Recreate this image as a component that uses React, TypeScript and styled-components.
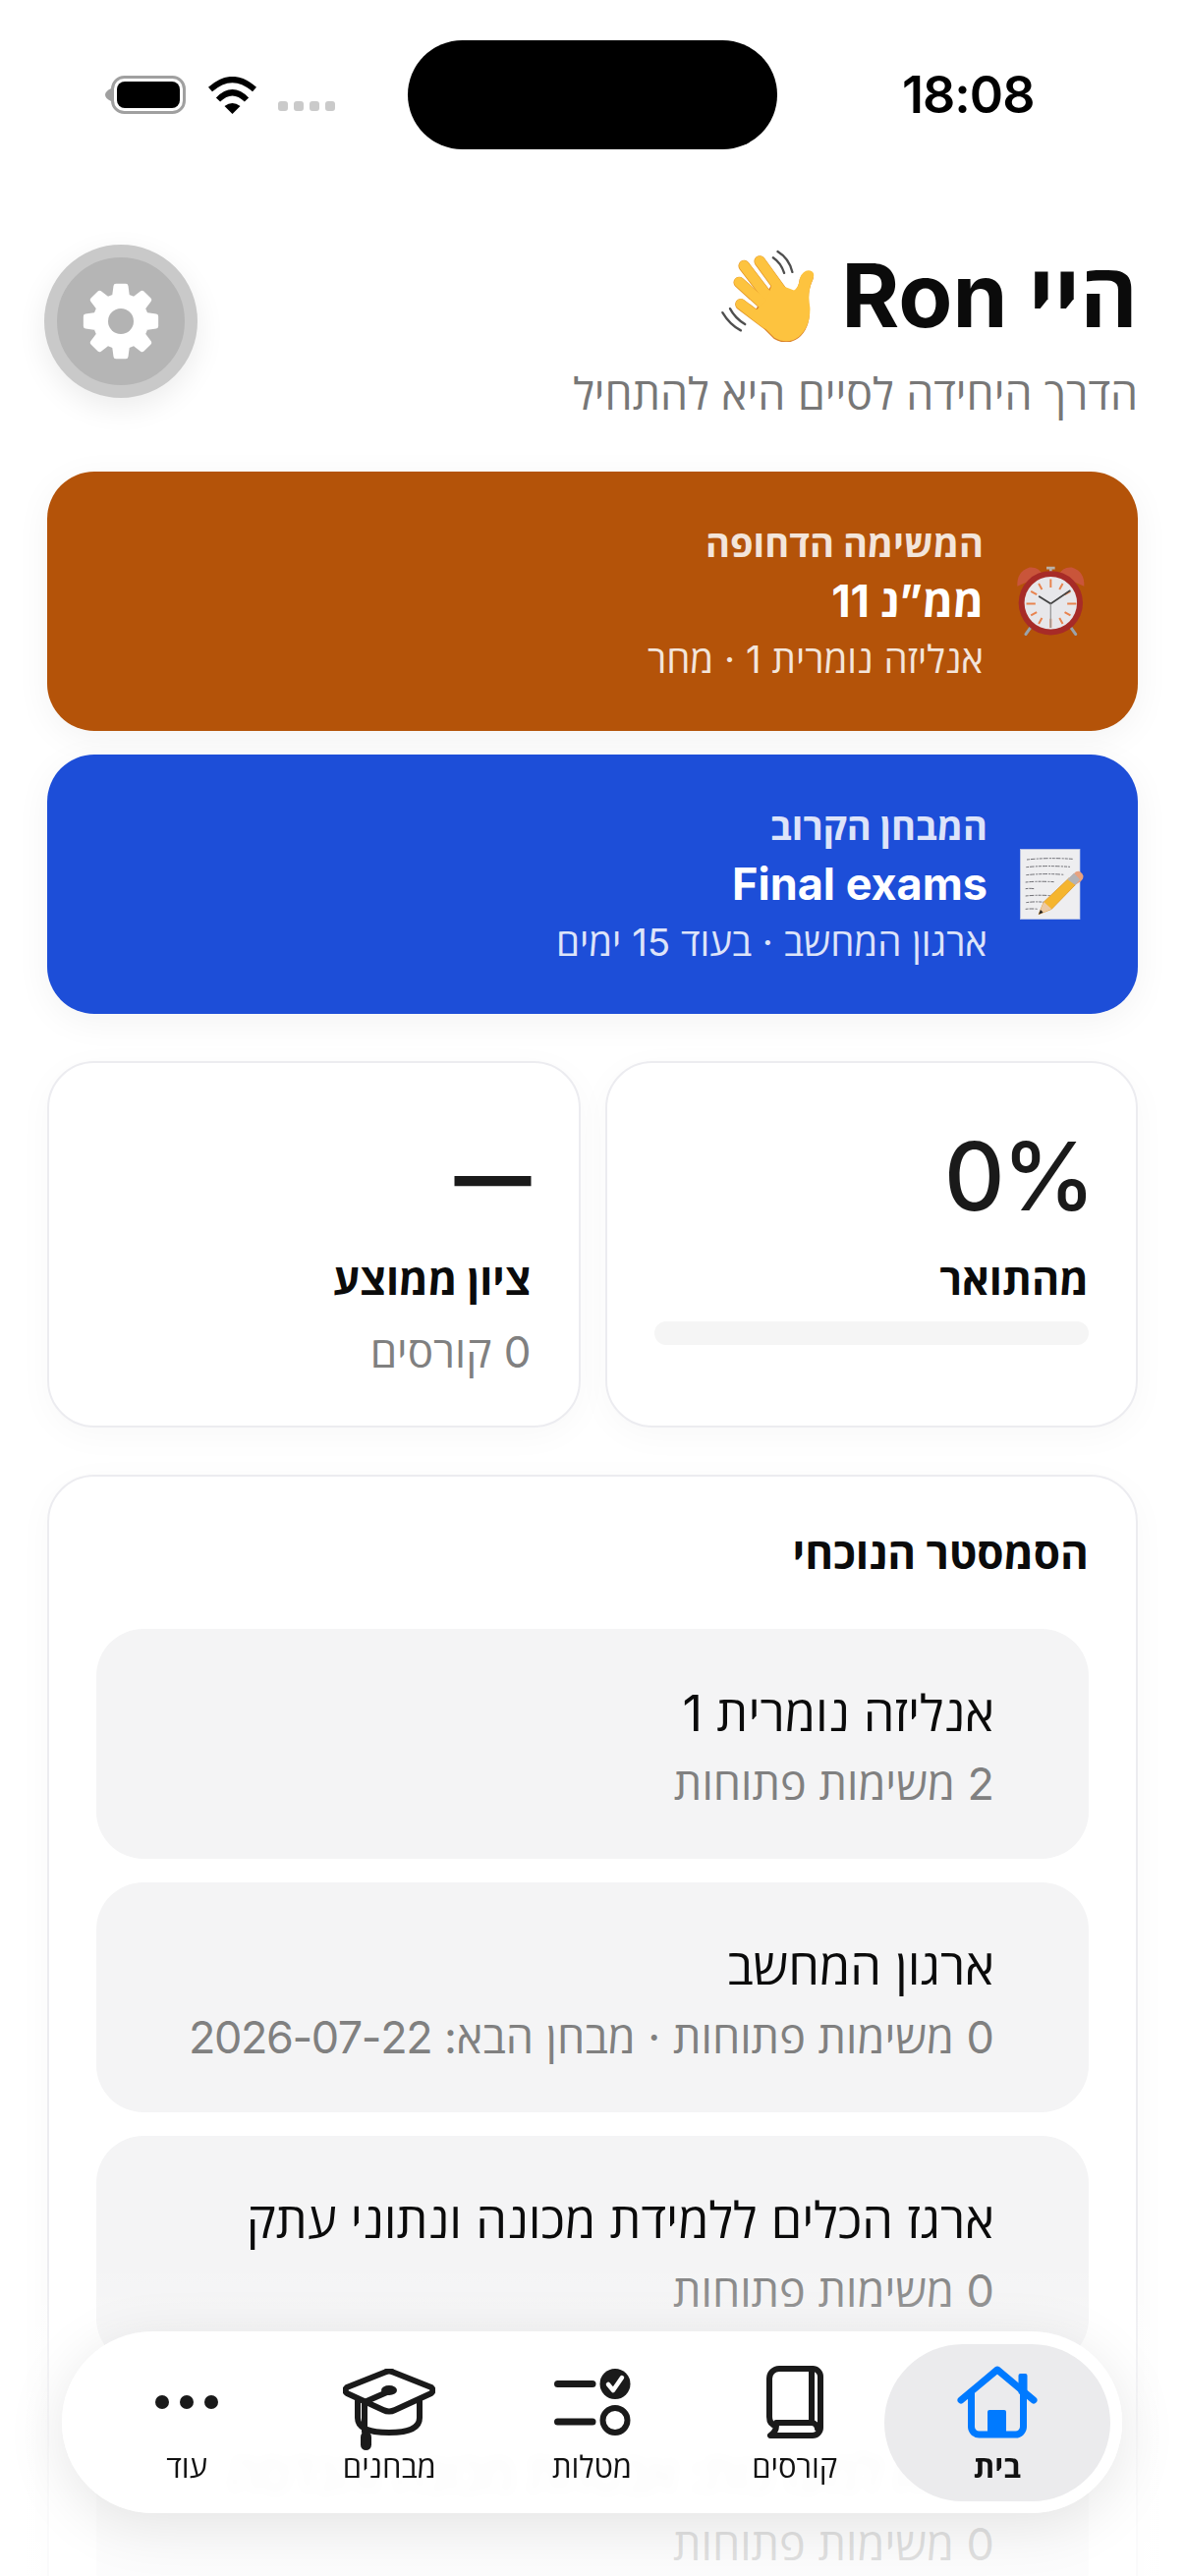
import React from 'react';
import styled, { createGlobalStyle } from 'styled-components';

const GlobalStyle = createGlobalStyle`
  html, body {
    margin: 0;
    padding: 0;
    background: #fff;
  }
  * { box-sizing: border-box; }
`;

const Screen = styled.div`
  position: relative;
  width: 1206px;
  height: 2622px;
  overflow: hidden;
  background: #fff;
  font-family: Inter, "Open Sans", "Liberation Sans", sans-serif;
  color: #0b0b0b;
`;

const StatusBar = styled.div`
  direction: ltr;
  display: flex;
  align-items: center;
  height: 111px;
  margin-top: 41px;
  padding-left: 106px;
`;

const StatusIcons = styled.div`
  display: flex;
  align-items: center;
  width: 235px;
  gap: 21px;
`;

const Dots = styled.div`
  display: flex;
  gap: 6px;
  margin-top: 22px;
`;

const Dot = styled.span`
  width: 10px;
  height: 10px;
  border-radius: 3px;
  background: #cacaca;
`;

const Island = styled.div`
  width: 376px;
  height: 111px;
  margin-left: 74px;
  border-radius: 56px;
  background: #000;
`;

const Clock = styled.div`
  width: 134px;
  margin-left: 127px;
  font-size: 52px;
  font-weight: 600;
  letter-spacing: -1px;
  color: #000;
  text-align: right;
`;

const Main = styled.main`
  direction: rtl;
  padding: 97px 48px 0;
`;

const Header = styled.header`
  display: flex;
  justify-content: space-between;
  align-items: flex-start;
  margin-bottom: 49px;
`;

const Title = styled.h1`
  display: flex;
  align-items: center;
  gap: 26px;
  margin: 0;
  height: 104px;
  font-size: 90px;
  line-height: 104px;
  font-weight: 700;
`;

const Subtitle = styled.p`
  margin: 18px 0 0;
  font-size: 44.7px;
  line-height: 60px;
  color: #777;
`;

const GearButton = styled.button`
  display: flex;
  align-items: center;
  justify-content: center;
  width: 156px;
  height: 156px;
  margin-left: -3px;
  padding: 0;
  border: 13px solid #c9c9c9;
  border-radius: 50%;
  background: #b5b5b5;
  box-shadow: 0 10px 30px rgba(0, 0, 0, 0.08);
`;

const Highlights = styled.div`
  display: flex;
  flex-direction: column;
  gap: 24px;
`;

const Highlight = styled.div<{ $bg: string }>`
  display: flex;
  align-items: center;
  gap: 33px;
  height: 264px;
  padding: 0 54px 0 48px;
  border-radius: 48px;
  background: ${(p) => p.$bg};
  color: #fff;
  box-shadow: 0 8px 36px rgba(0, 0, 0, 0.05);
`;

const HighlightText = styled.div`
  display: flex;
  flex-direction: column;
  gap: 8px;
`;

const HighlightLabel = styled.div`
  font-size: 38px;
  line-height: 46px;
  font-weight: 700;
  opacity: 0.85;
`;

const HighlightTitle = styled.div`
  font-size: 45px;
  line-height: 56px;
  font-weight: 700;
`;

const HighlightSub = styled.div`
  font-size: 38.5px;
  line-height: 46px;
  opacity: 0.85;
`;

const Stats = styled.div`
  display: grid;
  grid-template-columns: 1fr 1fr;
  gap: 25px;
  margin-top: 48px;
`;

const Card = styled.section`
  border: 2px solid #ececf0;
  border-radius: 48px;
  background: #fff;
  box-shadow: 0 8px 36px rgba(0, 0, 0, 0.03);
`;

const StatCard = styled(Card)`
  height: 373px;
  padding: 58px 48px 0;
`;

const StatValue = styled.div`
  height: 120px;
  margin-right: -4px;
  font-size: 96px;
  line-height: 114px;
  font-weight: 500;
  letter-spacing: -3px;
  color: #1a1a1a;
`;

const StatDash = styled(StatValue)`
  margin-right: 0;
  font-size: 78px;
  font-weight: 800;
  letter-spacing: 0;
`;

const StatLabel = styled.div`
  margin-top: 15px;
  font-size: 43px;
  line-height: 54px;
  font-weight: 700;
`;

const StatNote = styled.div`
  margin-top: 20px;
  font-size: 44px;
  line-height: 54px;
  color: #808080;
`;

const ProgressTrack = styled.div`
  height: 24px;
  margin-top: 16px;
  border-radius: 12px;
  background: #f5f5f5;
`;

const Semester = styled(Card)`
  margin-top: 48px;
  padding: 48px;
`;

const SemesterTitle = styled.h2`
  margin: 0 0 47px;
  font-size: 44px;
  line-height: 60px;
  font-weight: 700;
`;

const CourseList = styled.div`
  display: flex;
  flex-direction: column;
  gap: 24px;
`;

const Course = styled.div`
  height: 234px;
  padding: 50px 96px 0 48px;
  border-radius: 48px;
  background: #f4f4f5;
`;

const CourseName = styled.div`
  font-size: 50.5px;
  line-height: 72px;
`;

const CourseNote = styled.div`
  margin-top: 8px;
  font-size: 45px;
  line-height: 56px;
  color: #808080;
`;

const NoteDate = styled.span`
  letter-spacing: -1.4px;
`;

const BottomFade = styled.div`
  position: absolute;
  left: 0;
  right: 0;
  bottom: 0;
  height: 320px;
  background: linear-gradient(to bottom, rgba(255, 255, 255, 0), rgba(255, 255, 255, 0.72) 60%, rgba(255, 255, 255, 0.76));
`;

const TabBar = styled.nav`
  direction: rtl;
  position: absolute;
  left: 63px;
  bottom: 64px;
  display: grid;
  grid-template-columns: repeat(5, 1fr);
  width: 1079px;
  height: 185px;
  padding: 0 24px;
  border-radius: 93px;
  background: rgba(255, 255, 255, 0.9);
  backdrop-filter: blur(6px);
  box-shadow: 0 12px 60px rgba(0, 0, 0, 0.1);
`;

const Tab = styled.div<{ $active?: boolean }>`
  position: relative;
  display: flex;
  flex-direction: column;
  align-items: center;

  ${(p) =>
    p.$active &&
    `
    &::before {
      content: '';
      position: absolute;
      inset: 13px -12px 12px;
      border-radius: 80px;
      background: #ebebed;
    }
  `}
`;

const TabIcon = styled.div<{ $nudge?: number }>`
  position: relative;
  top: ${(p) => p.$nudge ?? 0}px;
  display: flex;
  align-items: center;
  justify-content: center;
  height: 92px;
  margin-top: 26px;
`;

const TabLabel = styled.div<{ $active?: boolean }>`
  position: relative;
  font-size: 31px;
  line-height: 40px;
  font-weight: ${(p) => (p.$active ? 700 : 400)};
  color: #111;
`;

// Eight-tooth cog with a punched centre
function gearPath() {
  const cx = 39;
  const cy = 39;
  const parts: string[] = [];
  for (let i = 0; i < 8; i++) {
    const a = (i * Math.PI) / 4 - Math.PI / 2;
    const pt = (r: number, da: number) =>
      `${(cx + r * Math.cos(a + da)).toFixed(2)} ${(cy + r * Math.sin(a + da)).toFixed(2)}`;
    parts.push(
      `${i === 0 ? 'M' : 'L'}${pt(26, -0.25)} L${pt(36, -0.14)} L${pt(36, 0.14)} L${pt(26, 0.25)}`
    );
  }
  return parts.join(' ') + ' Z';
}

const GearIcon = () => (
  <svg width="78" height="78" viewBox="0 0 78 78">
    <path d={gearPath()} fill="#fff" stroke="#fff" strokeWidth="5" strokeLinejoin="round" />
    <circle cx="39" cy="39" r="13" fill="#b3b3b3" />
  </svg>
);

const BatteryIcon = () => (
  <svg width="84" height="39" viewBox="0 0 84 39">
    <path d="M7 13 Q1 16 1 19.5 Q1 23 7 26 Z" fill="#9f9f9f" />
    <rect x="8.5" y="1.5" width="73" height="36" rx="12" fill="none" stroke="#a0a0a0" strokeWidth="3" />
    <rect x="13" y="6" width="64" height="27" rx="8" fill="#000" />
  </svg>
);

const WifiIcon = () => (
  <svg width="51" height="38" viewBox="0 0 51 38">
    <path d="M3 13 Q25.5 -7 48 13" fill="none" stroke="#000" strokeWidth="6" />
    <path d="M11 23.5 Q25.5 9 40 23.5" fill="none" stroke="#000" strokeWidth="6" />
    <path d="M17.5 30 Q25.5 24 33.5 30 L25.5 38 Z" fill="#000" />
  </svg>
);

const WavingHand = () => (
  <svg width="97" height="94" viewBox="30 35 290 283">
    <g fill="none" stroke="#4f4f4f" strokeWidth="7" strokeLinecap="round">
      <path d="M205 41 Q240 62 250 104" />
      <path d="M191 60 Q215 76 225 107" />
      <path d="M36 228 Q58 265 92 283" />
      <path d="M59 216 Q74 245 105 264" />
    </g>
    <path
      d="M190 135 L255 160 Q270 150 273 122 Q285 95 305 100 Q322 105 312 128 Q295 165 304 212 Q306 272 270 302 Q235 328 195 305 L125 235 Z"
      fill="#d9822b"
      transform="translate(-1 4)"
    />
    <g fill="none" stroke="#e49a2e" strokeWidth="35" strokeLinecap="round">
      <path d="M150 71 L222 170" />
      <path d="M102 85 L190 200" />
      <path d="M87 136 L175 215" />
      <path d="M92 203 L170 262" />
    </g>
    <g fill="none" stroke="#fdc33f" strokeWidth="31" strokeLinecap="round">
      <path d="M150 70 L222 170" />
      <path d="M102 84 L190 200" />
      <path d="M87 135 L175 215" />
      <path d="M92 202 L170 262" />
    </g>
    <path
      d="M190 135 L255 160 Q270 150 273 122 Q285 95 305 100 Q322 105 312 128 Q295 165 304 212 Q306 272 270 302 Q235 328 195 305 L125 235 L170 190 Z"
      fill="#fdc33f"
    />
  </svg>
);

const AlarmClock = () => (
  <svg width="70" height="73" viewBox="40 46 212 220">
    <g stroke="#9aa3ab" strokeWidth="9" strokeLinecap="round">
      <path d="M92 225 L70 256" />
      <path d="M202 225 L224 256" />
    </g>
    <path d="M147 70 V50 M134 52 H160" stroke="#b9b0a8" strokeWidth="8" />
    <path d="M44 108 Q42 62 82 50 Q112 48 122 74 Z" fill="#c9553a" />
    <path d="M250 108 Q252 62 212 50 Q182 48 172 74 Z" fill="#c9553a" />
    <circle cx="147" cy="160" r="99" fill="#a72b27" />
    <path d="M48 160 A99 99 0 0 1 246 160 A90 90 0 0 0 48 160 Z" fill="#d9693f" />
    <circle cx="147" cy="160" r="81" fill="#e7e7ea" />
    <g stroke="#e8834e" strokeWidth="6">
      <path d="M147 86 V112 M147 208 V236 M72 162 H100 M198 162 H226" />
      <path d="M110 100 L120 118 M184 100 L174 118 M86 124 L104 134 M208 124 L190 134 M86 198 L104 188 M208 198 L190 188 M110 224 L120 206 M184 224 L174 206" />
    </g>
    <path d="M147 162 L112 140" stroke="#444" strokeWidth="6" strokeLinecap="round" />
    <path d="M147 162 L206 122" stroke="#444" strokeWidth="5" strokeLinecap="round" />
    <path d="M147 162 V236" stroke="#9a9a9a" strokeWidth="4" />
  </svg>
);

const MemoPad = () => (
  <svg width="66" height="72" viewBox="55 912 198 216">
    <rect x="56" y="913" width="182" height="214" fill="#eeeef0" stroke="#b9c4e6" strokeWidth="2" />
    <g fill="none" stroke="#55565c" strokeWidth="2.5" strokeDasharray="9 3 14 4 6 3">
      <path d="M76 945 Q140 938 216 943" />
      <path d="M74 968 Q130 962 208 967" />
      <path d="M74 992 Q130 986 190 991" />
      <path d="M72 1014 Q110 1010 160 1013" />
      <path d="M72 1034 Q84 1032 100 1034" />
      <path d="M72 1056 Q110 1052 150 1055" />
      <path d="M74 1076 Q100 1072 130 1075" />
      <path d="M72 1096 Q90 1094 110 1096" />
    </g>
    <path d="M112 1112 L128 1074 L204 1002 L224 1022 L152 1096 Z" fill="#f5b52e" stroke="#d9901f" strokeWidth="2" />
    <path d="M112 1112 L128 1074 L152 1096 Z" fill="#ecc9a4" />
    <path d="M112 1112 L118 1098 L126 1106 Z" fill="#222" />
    <path d="M204 1002 L226 982 Q240 976 248 994 Q250 1004 240 1012 L224 1022 Z" fill="#e8a27f" />
    <path d="M200 1006 L220 986 L238 1006 L224 1022 Z" fill="#b3b3b6" />
  </svg>
);

const HomeIcon = () => (
  <svg width="82" height="74" viewBox="0 0 82 74">
    <g fill="none" stroke="#007aff" strokeWidth="7" strokeLinecap="round" strokeLinejoin="round">
      <path d="M4 35 L41 4 L78 35" />
      <path d="M14.5 28 V62 a8 8 0 0 0 8 8 H59.500 a8 8 0 0 0 8 -8 V28" />
    </g>
    <rect x="62.5" y="8" width="9" height="21" rx="2" fill="#007aff" />
    <rect x="31" y="45" width="19" height="26" rx="2" fill="#007aff" />
  </svg>
);

const BookIcon = () => (
  <svg width="58" height="74" viewBox="0 0 58 74">
    <g fill="none" stroke="#1a1a1a" strokeWidth="6" strokeLinecap="round" strokeLinejoin="round">
      <path d="M4 71 H47 a8 8 0 0 0 8 -8 V11 a8 8 0 0 0 -8 -8 H13 a10 10 0 0 0 -10 10 V52 q0 8 7 9 q0 6 -6 10 Z" />
      <path d="M10 58 H46 a6.500 6.500 0 0 1 6 6" />
      <path d="M46 3 V58" />
    </g>
  </svg>
);

const TasksIcon = () => (
  <svg width="78" height="68" viewBox="0 0 78 68">
    <g stroke="#1a1a1a" strokeWidth="7" strokeLinecap="round">
      <path d="M3.5 15.5 H39" />
      <path d="M3.5 54 H39" />
    </g>
    <circle cx="62" cy="15.5" r="15.5" fill="#1a1a1a" />
    <path d="M55 16 L60 22 L69 9" fill="none" stroke="#fff" strokeWidth="4.5" strokeLinecap="round" strokeLinejoin="round" />
    <circle cx="62" cy="52.5" r="12.5" fill="none" stroke="#1a1a1a" strokeWidth="6" />
  </svg>
);

const CapIcon = () => (
  <svg width="94" height="83" viewBox="0 0 94 83">
    <g fill="none" stroke="#1a1a1a" strokeWidth="6" strokeLinecap="round" strokeLinejoin="round">
      <path d="M43 3.5 Q47 1.500 51 3.500 L90 19 Q93 22 90 25 L53 42 Q47 45 41 42 L4 25 Q1 22 4 19 Z" />
      <path d="M15 33 V50 Q15 65 47 65 Q78 65 78 50 V33" />
      <path d="M22 34 V64" />
      <path d="M22 34 L47 23" />
    </g>
    <ellipse cx="47" cy="22" rx="8" ry="5" fill="#1a1a1a" />
    <rect x="18" y="64" width="11" height="19" rx="5.500" fill="#1a1a1a" />
  </svg>
);

const MoreIcon = () => (
  <svg width="64" height="14" viewBox="0 0 64 14">
    <circle cx="7" cy="7" r="7" fill="#1a1a1a" />
    <circle cx="32" cy="7" r="7" fill="#1a1a1a" />
    <circle cx="57" cy="7" r="7" fill="#1a1a1a" />
  </svg>
);

const courses = [
  { name: 'אנליזה נומרית 1', note: '2 משימות פתוחות' },
  { name: 'ארגון המחשב', note: '0 משימות פתוחות · מבחן הבא: ', date: '2026-07-22' },
  { name: 'ארגז הכלים ללמידת מכונה ונתוני עתק', note: '0 משימות פתוחות' },
  { name: 'מבוא למערכות: אבטחת מכונה והנדסה', note: '0 משימות פתוחות' },
];

const tabs = [
  { label: 'בית', icon: <HomeIcon />, active: true },
  { label: 'קורסים', icon: <BookIcon /> },
  { label: 'מטלות', icon: <TasksIcon /> },
  { label: 'מבחנים', icon: <CapIcon />, nudge: 7 },
  { label: 'עוד', icon: <MoreIcon /> },
];

export default function App() {
  return (
    <Screen>
      <GlobalStyle />
      <StatusBar>
        <StatusIcons>
          <BatteryIcon />
          <WifiIcon />
          <Dots>
            <Dot />
            <Dot />
            <Dot />
            <Dot />
          </Dots>
        </StatusIcons>
        <Island />
        <Clock>18:08</Clock>
      </StatusBar>

      <Main>
        <Header>
          <div>
            <Title>
              <span>היי Ron</span>
              <WavingHand />
            </Title>
            <Subtitle>הדרך היחידה לסיים היא להתחיל</Subtitle>
          </div>
          <GearButton aria-label="הגדרות">
            <GearIcon />
          </GearButton>
        </Header>

        <Highlights>
          <Highlight $bg="#b45309">
            <AlarmClock />
            <HighlightText>
              <HighlightLabel>המשימה הדחופה</HighlightLabel>
              <HighlightTitle>ממ”נ 11</HighlightTitle>
              <HighlightSub>אנליזה נומרית 1 · מחר</HighlightSub>
            </HighlightText>
          </Highlight>
          <Highlight $bg="#1d4ed8">
            <MemoPad />
            <HighlightText>
              <HighlightLabel>המבחן הקרוב</HighlightLabel>
              <HighlightTitle>Final exams</HighlightTitle>
              <HighlightSub>ארגון המחשב · בעוד 15 ימים</HighlightSub>
            </HighlightText>
          </Highlight>
        </Highlights>

        <Stats>
          <StatCard>
            <StatValue>0%</StatValue>
            <StatLabel>מהתואר</StatLabel>
            <ProgressTrack />
          </StatCard>
          <StatCard>
            <StatDash>—</StatDash>
            <StatLabel>ציון ממוצע</StatLabel>
            <StatNote>0 קורסים</StatNote>
          </StatCard>
        </Stats>

        <Semester>
          <SemesterTitle>הסמסטר הנוכחי</SemesterTitle>
          <CourseList>
            {courses.map((c) => (
              <Course key={c.name}>
                <CourseName>{c.name}</CourseName>
                <CourseNote>
                  {c.note}
                  {c.date && <NoteDate>{c.date}</NoteDate>}
                </CourseNote>
              </Course>
            ))}
          </CourseList>
        </Semester>
      </Main>

      <BottomFade />
      <TabBar>
        {tabs.map((t) => (
          <Tab key={t.label} $active={t.active}>
            <TabIcon $nudge={t.nudge}>{t.icon}</TabIcon>
            <TabLabel $active={t.active}>{t.label}</TabLabel>
          </Tab>
        ))}
      </TabBar>
    </Screen>
  );
}
